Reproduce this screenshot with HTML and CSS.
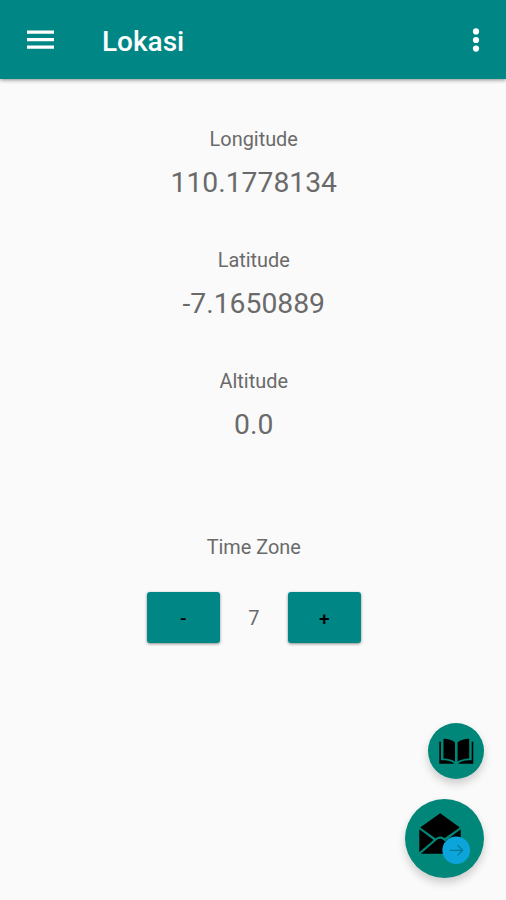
FILE: index.html
```html
<!DOCTYPE html>
<html lang="id">
<head>
<meta charset="utf-8">
<title>Lokasi</title>
<link rel="stylesheet" href="styles.css">
</head>
<body>
<header class="toolbar">
  <svg class="menu" width="27" height="20" viewBox="0 0 27 20" fill="#fff"><path d="M0 .5h27v3.200H0zM0 8h27v3.200H0zM0 15.500h27v3.200H0z"/></svg>
  <h1 class="title">Lokasi</h1>
  <svg class="more" width="8" height="24" viewBox="0 0 8 24" fill="#fff"><circle cx="4" cy="3.400" r="3.100"/><circle cx="4" cy="12" r="3.100"/><circle cx="4" cy="20.600" r="3.100"/></svg>
</header>
<main class="content">
  <section class="field"><div class="label">Longitude</div><div class="value">110.1778134</div></section>
  <section class="field"><div class="label">Latitude</div><div class="value">-7.1650889</div></section>
  <section class="field"><div class="label">Altitude</div><div class="value">0.0</div></section>
  <section class="zone">
    <div class="label">Time Zone</div>
    <div class="stepper">
      <button class="step">-</button>
      <span class="count">7</span>
      <button class="step">+</button>
    </div>
  </section>
</main>
<div class="fabs">
  <div class="fab fab-small">
    <svg width="56" height="56" viewBox="0 0 56 56">
      <path d="M15.500 15.700C20 15.700 24.500 16.800 27 19.500V38.800C24.500 36.500 20.500 35.800 15.500 35.500zM41.200 15.700C36.700 15.700 32.200 16.800 29.600 19.500V38.800C32.200 36.500 36.200 35.800 41.200 35.500z"/>
      <path d="M11.300 18.700h1.600v18.600c5 0 10 .2 13.500 3.400H11.300zM45.300 18.700h-1.600v18.600c-5 0-10 .2-13.500 3.400h15.100z"/>
    </svg>
  </div>
  <div class="fab fab-large">
    <svg width="79" height="79" viewBox="0 0 79 79">
      <path d="M15.200 28.500L35.200 14.200 54.800 28.500 39.500 39.200c-2.400-2.300-5.900-2.500-8.700.2z"/>
      <path d="M14.300 30.200L28.600 40.900 14.300 53.200zM55.700 30.200V54.800H15.900L31.800 41.100c2.100-1.900 4.600-1.900 6.500 0l1.600 1.400z"/>
      <circle cx="51.200" cy="51.300" r="13.800" fill="#0ba5dc"/>
      <path d="M44.600 51.300h12.800M52.500 46.200l5.100 5.100-5.100 5.100" fill="none" stroke="#007c98" stroke-width="1.300"/>
    </svg>
  </div>
</div>
</body>
</html>
```

FILE: styles.css
```css
* { box-sizing: border-box; }
body {
  margin: 0;
  height: 900px;
  overflow: hidden;
  background: #fafafa;
  color: #6a6a6a;
  font-family: Roboto, sans-serif;
}
.toolbar {
  display: flex;
  align-items: center;
  height: 79px;
  padding: 1px 26.500px 0 26.500px;
  background: #008785;
  box-shadow: 0 1px 4px rgba(0, 0, 0, .45);
}
.title {
  margin: 4px 0 0 48.500px;
  color: #fff;
  font-size: 28px;
  line-height: 34px;
  font-weight: 500;
}
.more { margin-left: auto; }
.content { padding: 47px 0 0 1.500px; text-align: center; }
.field { height: 121px; }
.label { font-size: 19.900px; line-height: 28px; }
.value { margin-top: 12px; font-size: 28.300px; line-height: 34px; }
.zone { padding-top: 45px; }
.stepper { display: flex; justify-content: center; align-items: center; margin-top: 30px; }
.step {
  width: 73px;
  height: 51px;
  padding: 2px 0 0;
  border: 0;
  border-radius: 3px;
  background: #008785;
  color: #000;
  font: 500 19px Roboto, sans-serif;
  box-shadow: 0 1px 3px rgba(0, 0, 0, .45);
}
.count { width: 68px; font-size: 20px; }
.fabs {
  position: absolute;
  right: 22px;
  bottom: 22px;
  display: flex;
  flex-direction: column;
  align-items: flex-end;
  gap: 20px;
}
.fab { border-radius: 50%; background: #008779; box-shadow: 0 5px 9px rgba(0, 0, 0, .18); }
.fab svg { display: block; }
.fab-small { width: 56px; height: 56px; }
.fab-large { width: 79px; height: 79px; }
```
